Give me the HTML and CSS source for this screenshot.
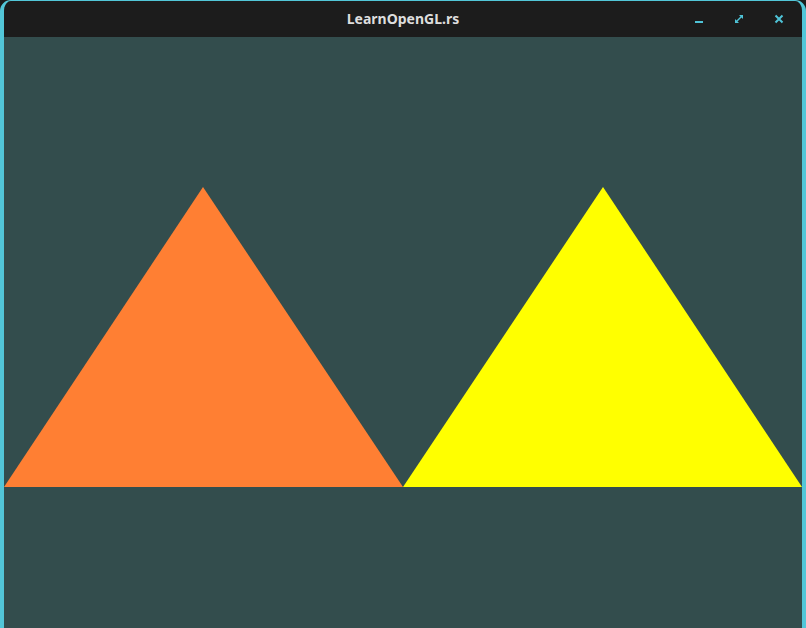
FILE: index.html
```html
<!DOCTYPE html>
<html>
<head>
<meta charset="utf-8">
<link rel="stylesheet" href="styles.css">
</head>
<body>
<div class="window">
  <div class="titlebar">
    <div class="title">LearnOpenGL.rs</div>
    <div class="controls">
      <svg class="ctl" width="12" height="12" viewBox="0 0 12 12"><rect x="2" y="8" width="8" height="2" fill="#4fc3d7"/></svg>
      <svg class="ctl" width="12" height="12" viewBox="0 0 12 12"><g stroke="#4fc3d7" stroke-width="1.5" fill="none"><path d="M3 9 L9 3"/></g><path d="M6 2 H10 V6 Z" fill="#4fc3d7"/><path d="M2 6 V10 H6 Z" fill="#4fc3d7"/></svg>
      <svg class="ctl" width="12" height="12" viewBox="0 0 12 12"><g stroke="#4fc3d7" stroke-width="2" fill="none"><path d="M2.5 2.5 L9.5 9.5 M9.5 2.5 L2.5 9.5"/></g></svg>
    </div>
  </div>
  <div class="content">
    <svg class="scene" width="798" height="591" viewBox="0 0 798 591">
      <polygon points="0,450 399,450 199,150" fill="#ff7f33"/>
      <polygon points="399,450 798,450 599,150" fill="#ffff00"/>
    </svg>
  </div>
</div>
</body>
</html>
```
FILE: styles.css
```css
html, body {
  margin: 0;
  padding: 0;
  background: #1c1c1c;
  width: 806px;
  height: 628px;
  overflow: hidden;
}
.window {
  width: 798px;
  height: 640px;
  border: 4px solid #52c6d8;
  border-top-width: 1px;
  border-radius: 11px 11px 0 0;
  overflow: hidden;
  background: #334d4d;
}
.titlebar {
  height: 36px;
  background: #1c1c1c;
  position: relative;
  display: flex;
  align-items: center;
  justify-content: center;
}
.title {
  font-family: "Noto Sans", "Open Sans", sans-serif;
  font-weight: 700;
  font-size: 14px;
  color: #dedede;
  margin-top: -1px;
}
.controls {
  position: absolute;
  right: 17px;
  top: 12px;
  display: flex;
  gap: 28px;
}
.ctl {
  display: block;
}
.content {
  height: 603px;
  background: #334d4d;
}
.scene {
  display: block;
}
```
